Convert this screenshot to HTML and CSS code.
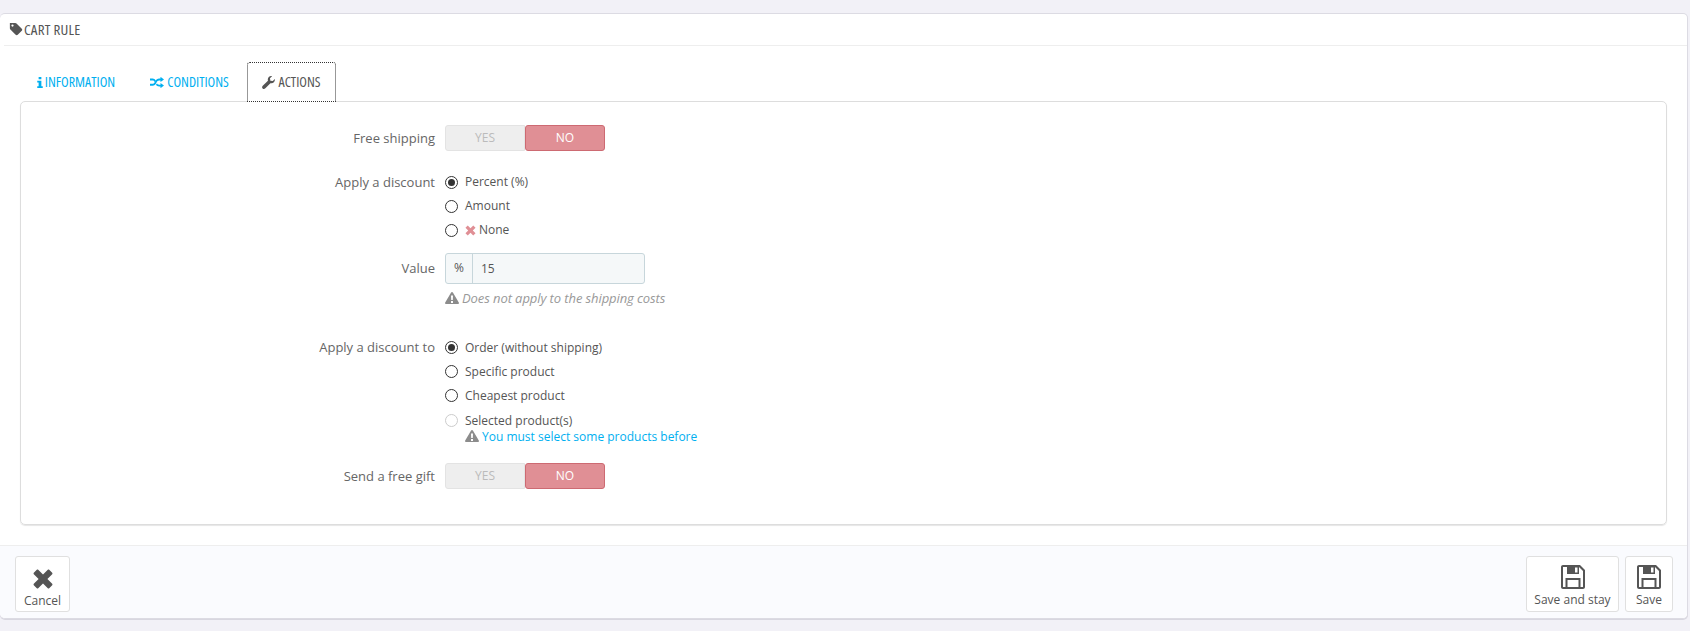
FILE: index.html
```html
<!DOCTYPE html>
<html lang="en">
<head>
<meta charset="utf-8">
<title>Cart rule</title>
<link rel="stylesheet" href="styles.css">
</head>
<body>
<div class="panel">
  <div class="panel-heading">
    <svg class="ic-tag" viewBox="0 0 16 16"><path d="M1 1h6.200c.5 0 1 .2 1.400.6l6 6c.7.7.7 1.700 0 2.400l-4.600 4.600c-.7.7-1.700.7-2.400 0l-6-6C1.200 8.200 1 7.700 1 7.200zM4 2.800a1.300 1.300 0 1 0 0 2.600 1.300 1.300 0 0 0 0-2.600z" fill-rule="evenodd"/></svg>
    <span class="cond cond-head">CART RULE</span>
  </div>
  <div class="tabs">
    <a class="tab tab-info"><svg class="ic-info" viewBox="0 0 6 12"><path d="M1.500 0h3v2.500h-3zM0 4h4.500v6H6v2H0v-2h1.500V6H0z"/></svg><span class="cond">INFORMATION</span></a>
    <a class="tab tab-cond"><svg class="ic-shuffle" viewBox="0 0 16 12"><path d="M0 2h3c1.500 0 2.500.8 3.500 2.200L5.200 5.800C4.500 4.800 4 4.200 3 4.200H0zM0 8h3c1 0 1.800-1 3-3s2.500-3 4.500-3H12V0l4 3-4 3V4.200h-1.500C9 4.200 8.300 5 7.200 7S5 10.200 3 10.200H0zM8 7.700c.7 1 1.400 1.300 2.500 1.300H12V7l4 3-4 3v-2h-1.500c-1.800 0-2.800-.9-3.700-2z" transform="translate(0 -.5)"/></svg><span class="cond">CONDITIONS</span></a>
    <a class="tab active"><svg class="ic-wrench" viewBox="0 0 14 14"><path d="M13.800 3.200c.3 1.400-.1 2.700-1 3.600-1 1-2.400 1.300-3.700.9L3.600 13.300c-.9.900-2.100.9-2.900.1s-.8-2 .1-2.900l5.600-5.500C6 3.700 6.300 2.200 7.300 1.200 8.200.3 9.500-.1 10.800.2L8.600 2.400l.4 2.600 2.600.4z"/></svg><span class="cond">ACTIONS</span></a>
  </div>
  <div class="tab-body">
    <div class="row row-ship">
      <label class="lbl">Free shipping</label>
      <div class="switch"><span class="sw-yes">YES</span><span class="sw-no">NO</span></div>
    </div>
    <div class="row row-disc">
      <label class="lbl lbl-radio">Apply a discount</label>
      <div class="radios">
        <div class="radio"><i class="dot on"></i><span>Percent (%)</span></div>
        <div class="radio"><i class="dot"></i><span>Amount</span></div>
        <div class="radio"><i class="dot"></i><svg class="ic-x" viewBox="0 0 12 12"><path d="M3 .5 6 3.500 9 .5 11.500 3l-3 3 3 3L9 11.500l-3-3-3 3L.5 9l3-3-3-3z"/></svg><span>None</span></div>
      </div>
    </div>
    <div class="row row-value">
      <label class="lbl lbl-value">Value</label>
      <div>
        <div class="input-group"><span class="addon">%</span><span class="val">15</span></div>
        <p class="hint"><svg class="ic-warn" viewBox="0 0 14 12"><path fill-rule="evenodd" d="M7 0c.4 0 .7.2.9.5l5.900 10c.4.7-.1 1.500-.9 1.500H1.100c-.8 0-1.300-.8-.9-1.500l5.900-10C6.300.2 6.600 0 7 0zM6 3.500l.2 4.500h1.600L8 3.500zM6 9v2h2V9z"/></svg><em>Does not apply to the shipping costs</em></p>
      </div>
    </div>
    <div class="row row-to">
      <label class="lbl lbl-radio">Apply a discount to</label>
      <div class="radios">
        <div class="radio"><i class="dot on"></i><span>Order (without shipping)</span></div>
        <div class="radio"><i class="dot"></i><span>Specific product</span></div>
        <div class="radio"><i class="dot"></i><span>Cheapest product</span></div>
        <div class="radio"><i class="dot off"></i><span>Selected product(s)</span></div>
        <p class="must"><svg class="ic-warn" viewBox="0 0 14 12"><path fill-rule="evenodd" d="M7 0c.4 0 .7.2.9.5l5.900 10c.4.7-.1 1.500-.9 1.500H1.100c-.8 0-1.300-.8-.9-1.500l5.900-10C6.300.2 6.600 0 7 0zM6 3.500l.2 4.500h1.600L8 3.500zM6 9v2h2V9z"/></svg><a>You must select some products before</a></p>
      </div>
    </div>
    <div class="row row-gift">
      <label class="lbl">Send a free gift</label>
      <div class="switch"><span class="sw-yes">YES</span><span class="sw-no">NO</span></div>
    </div>
  </div>
  <div class="panel-footer">
    <a class="btn btn-cancel"><svg class="ic-cancel" viewBox="0 0 20 20"><path d="M5.200.8 10 5.600 14.800.8c.4-.4 1-.4 1.400 0l3 3c.4.4.4 1 0 1.400L14.400 10l4.800 4.800c.4.400.4 1 0 1.400l-3 3c-.4.400-1 .4-1.400 0L10 14.400l-4.800 4.800c-.4.400-1 .4-1.400 0l-3-3c-.4-.4-.4-1 0-1.400L5.600 10 .8 5.200c-.4-.4-.4-1 0-1.400l3-3c.4-.4 1-.4 1.400 0z"/></svg><span>Cancel</span></a>
    <span class="spacer"></span>
    <a class="btn btn-stay"><svg class="ic-save" viewBox="0 0 24 24"><path fill-rule="evenodd" d="M2 0h17l5 5v17c0 1.100-.9 2-2 2H2c-1.100 0-2-.9-2-2V2C0 .9.900 0 2 0zM2.500 2H2v20h2.500v-9h15v9H22V6l-4-4v7H6V2zM14 2.500v5h2.500v-5zM6.500 15v7h11v-7z"/></svg><span>Save and stay</span></a>
    <a class="btn btn-save"><svg class="ic-save" viewBox="0 0 24 24"><path fill-rule="evenodd" d="M2 0h17l5 5v17c0 1.100-.9 2-2 2H2c-1.100 0-2-.9-2-2V2C0 .9.900 0 2 0zM2.500 2H2v20h2.500v-9h15v9H22V6l-4-4v7H6V2zM14 2.500v5h2.500v-5zM6.500 15v7h11v-7z"/></svg><span>Save</span></a>
  </div>
</div>
</body>
</html>
```
FILE: styles.css
```css
* { box-sizing: border-box; }
html, body { margin: 0; padding: 0; }
body {
  width: 1690px;
  height: 631px;
  overflow: hidden;
  background: #f2f1f7;
  padding: 13px 2px 0 0;
  font: 12px/1.42 "Open Sans", sans-serif;
  color: #555;
}
.panel {
  height: 606px;
  background: #fff;
  border: 1px solid #dcdbe3;
  border-left: 0;
  border-radius: 5px;
  box-shadow: 0 1px 0 #d8d7e0;
  display: flex;
  flex-direction: column;
}
.panel-heading {
  height: 32px;
  margin-left: 4px;
  padding-left: 5px;
  border-bottom: 1px solid #eee;
  display: flex;
  align-items: center;
  gap: 1px;
  color: #555;
}
.cond {
  font-stretch: 75%;
  font-size: 14px;
  line-height: 16px;
  white-space: nowrap;
  margin-top: -1px;
}
.cond-head { font-size: 15px; letter-spacing: .2px; margin-top: -2px; }
.ic-tag { width: 14px; height: 14px; fill: #555; margin-top: -1px; }
.tabs {
  display: flex;
  margin-top: 16px;
  padding-left: 20px;
  height: 40px;
  position: relative;
  z-index: 1;
}
.tab {
  display: flex;
  align-items: center;
  justify-content: center;
  gap: 2px;
  height: 40px;
  color: #00aff0;
  fill: #00aff0;
}
.tab-info { width: 112px; }
.tab-cond { width: 115px; }
.active {
  width: 89px;
  color: #555;
  fill: #555;
  background: #fff;
  border: 1px dotted #333;
  border-radius: 3px 3px 0 0;
}
.ic-info { width: 6px; height: 11px; }
.ic-shuffle { width: 14px; height: 11px; margin-right: 1px; }
.ic-wrench { width: 13px; height: 13px; margin-right: 1px; }
.tab-body {
  margin: -1px 20px 0 20px;
  height: 424px;
  border: 1px solid #ddd;
  border-radius: 5px;
  box-shadow: 0 1px 1px #e6e6e6;
  padding-top: 23px;
}
.row { display: flex; align-items: flex-start; }
.lbl {
  width: 414px;
  margin-right: 10px;
  text-align: right;
  color: #666;
  font-size: 13px;
  line-height: 26px;
  flex: none;
}
.lbl-radio { line-height: 22px; }
.lbl-value { line-height: 31px; }
.switch {
  width: 160px;
  height: 26px;
  display: flex;
  font-size: 12px;
  line-height: 24px;
  text-align: center;
}
.sw-yes {
  flex: 1;
  background: #eee;
  color: #bbb;
  border: 1px solid #e3e3e3;
  border-radius: 3px 0 0 3px;
}
.sw-no {
  flex: 1;
  background: #e08f95;
  color: #fff;
  border: 1px solid #cd6a72;
  border-radius: 3px;
}
.row-disc { margin-top: 20px; }
.row-value { margin-top: 12px; }
.row-to { margin-top: 29px; }
.row-gift { margin-top: 18px; }
.radios { display: flex; flex-direction: column; gap: 2px; }
.radio {
  display: flex;
  align-items: center;
  height: 22px;
  color: #555;
}
.row-to .radio { height: 22.300px; }
.dot {
  width: 13px;
  height: 13px;
  border: 1px solid #333;
  border-radius: 50%;
  margin-right: 7px;
  background: #fff;
  position: relative;
  flex: none;
}
.dot.on::after {
  content: "";
  position: absolute;
  inset: 2px;
  border-radius: 50%;
  background: #333;
}
.dot.off { border-color: #ccc; }
.ic-x { width: 11px; height: 11px; fill: #e08f95; margin-right: 3px; }
.input-group {
  width: 200px;
  height: 31px;
  display: flex;
  align-items: center;
  background: #f5f8f9;
  border: 1px solid #c7d6db;
  border-radius: 3px;
  color: #555;
}
.addon {
  width: 27px;
  height: 100%;
  border-right: 1px solid #c7d6db;
  text-align: center;
  line-height: 28px;
  font-size: 12px;
  flex: none;
}
.val { padding-left: 8px; }
.hint {
  margin: 5px 0 0;
  height: 18px;
  display: flex;
  align-items: center;
  gap: 3px;
  color: #999;
  font-size: 13px;
  letter-spacing: -.09px;
}
.ic-warn { width: 14px; height: 12px; fill: #8c8c8c; flex: none; }
.must {
  margin: -6px 0 0 20px;
  display: flex;
  align-items: center;
  gap: 3px;
  height: 18px;
}
.must a { color: #00aff0; }
.panel-footer {
  margin-top: 20px;
  flex: 1;
  background: #fafbfe;
  border-top: 1px solid #eee;
  border-radius: 0 0 5px 5px;
  display: flex;
  align-items: flex-start;
  padding: 10px 14px 0 15px;
  gap: 6px;
}
.spacer { flex: 1; }
.btn {
  height: 56px;
  background: #fff;
  border: 1px solid #e0e0e0;
  border-radius: 3px;
  display: flex;
  flex-direction: column;
  align-items: center;
  color: #555;
  font-size: 12px;
  line-height: 16px;
  padding-top: 8px;
  gap: 3px;
}
.btn-cancel { width: 55px; padding-top: 12px; gap: 4px; }
.btn-stay { width: 93px; }
.btn-save { width: 48px; }
.ic-cancel { width: 20px; height: 20px; fill: #555; }
.ic-save { width: 24px; height: 24px; fill: #555; }
```
